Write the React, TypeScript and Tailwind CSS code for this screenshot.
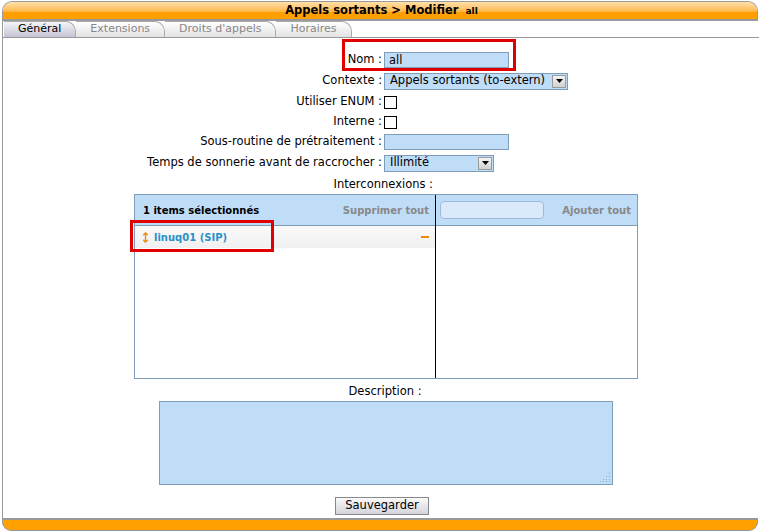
import { MoveVertical } from "lucide-react";

const font = { fontFamily: '"DejaVu Sans", Verdana, sans-serif' };

function Tab(props: { label: string; active?: boolean }) {
  return (
    <div
      className={
        "h-[16px] px-[14px] flex items-center text-[11px] border border-l-0 border-b-0 border-[#aaa] rounded-tr-[10px] " +
        (props.active
          ? "bg-gradient-to-b from-[#f4f4f8] to-[#c4c4d4] text-black"
          : "bg-gradient-to-b from-white to-[#e2e2e2] text-[#888]")
      }
    >
      {props.label}
    </div>
  );
}

function Select(props: { value: string; width: string }) {
  return (
    <div
      className={
        "h-[17px] flex items-center justify-between bg-[#c0ddf8] border border-[#7f9db9] text-[11.5px] pl-[5px] pr-[1px] " +
        props.width
      }
    >
      <span>{props.value}</span>
      <span className="w-[14px] h-[13px] bg-gradient-to-b from-[#f4f4f4] to-[#d0d0d0] border border-[#9a9a9a] flex items-center justify-center">
        <svg width="7" height="4" viewBox="0 0 7 4">
          <path d="M0 0h7L3.5 4z" fill="#000" />
        </svg>
      </span>
    </div>
  );
}

function Row(props: { label: string; children: React.ReactNode; h?: string }) {
  return (
    <div className={"flex items-center " + (props.h ?? "h-[20px]")}>
      <div className="w-[381px] text-right pr-[2px] text-[11.5px]">{props.label}</div>
      {props.children}
    </div>
  );
}

export default function App() {
  return (
    <div className="w-[759px] h-[532px] bg-white relative overflow-hidden text-black" style={font}>
      {/* header */}
      <div className="ml-[2px] mt-[1px] w-[756px] h-[20px] rounded-t-[10px] border border-[#999] border-b-[2px] overflow-hidden flex flex-col">
        <div className="h-[10px] bg-gradient-to-b from-[#ffe0a8] to-[#ffb640]" />
        <div className="flex-1 bg-[#ff9f00]" />
        <div className="absolute top-[2px] left-0 w-[759px] flex justify-center items-baseline gap-[7px] pl-[4px]">
          <span className="text-[11.5px] font-bold">Appels sortants &gt; Modifier</span>
          <span className="text-[9px] font-bold">all</span>
        </div>
      </div>

      {/* body */}
      <div className="ml-[2px] border-l border-[#999] h-[497px] flex flex-col">
        <div className="flex pl-[1px] border-b border-[#999]">
          <Tab label="Général" active />
          <Tab label="Extensions" />
          <Tab label="Droits d'appels" />
          <Tab label="Horaires" />
        </div>

        <div className="pt-[12px] flex flex-col">
          <Row label="Nom :">
            <div className="w-[125px] h-[16px] bg-[#c0ddf8] border border-[#7f9db9] text-[11.5px] leading-[14px] pl-[4px]">all</div>
          </Row>
          <Row label="Contexte :" h="h-[22px]">
            <Select value="Appels sortants (to-extern)" width="w-[184px]" />
          </Row>
          <Row label="Utiliser ENUM :">
            <div className="w-[13px] h-[13px] border border-black bg-white" />
          </Row>
          <Row label="Interne :">
            <div className="w-[13px] h-[13px] border border-black bg-white" />
          </Row>
          <Row label="Sous-routine de prétraitement :">
            <div className="w-[125px] h-[16px] bg-[#c0ddf8] border border-[#7f9db9]" />
          </Row>
          <Row label="Temps de sonnerie avant de raccrocher :" h="h-[22px]">
            <Select value="Illimité" width="w-[110px]" />
          </Row>
          <div className="h-[20px] flex items-center pt-[1px]">
            <div className="w-[430px] text-right text-[11.5px]">Interconnexions :</div>
          </div>

          {/* multiselect */}
          <div className="ml-[131px] w-[504px] h-[185px] border border-[#7f9db9] flex">
            <div className="w-[301px] flex flex-col border-r border-black">
              <div className="h-[31px] bg-[#c0ddf8] border-b border-[#7f9db9] flex items-center justify-between pl-[8px] pr-[6px] text-[10px] font-bold">
                <span>1 items sélectionnés</span>
                <span className="text-[#888]">Supprimer tout</span>
              </div>
              <div className="h-[22px] bg-gradient-to-b from-[#fafafa] to-[#f0f0f0] flex items-center justify-between pl-[5px] pr-[6px] text-[10px] font-bold">
                <span className="flex items-center gap-[3px] text-[#2a8fc8]">
                  <MoveVertical size={11} color="#f08c00" strokeWidth={3} />
                  linuq01 (SIP)
                </span>
                <span className="w-[8px] h-[2px] bg-[#f08c00]" />
              </div>
            </div>
            <div className="flex-1 flex flex-col">
              <div className="h-[31px] bg-[#c0ddf8] border-b border-[#7f9db9] flex items-center justify-between pl-[4px] pr-[6px] text-[10px] font-bold">
                <div className="w-[104px] h-[18px] rounded-[4px] bg-[#dbeafa] border border-[#9bb9d8]" />
                <span className="text-[#888]">Ajouter tout</span>
              </div>
            </div>
          </div>

          <div className="h-[22px] flex items-center justify-center text-[11.5px] pl-[8px] pt-[4px]">Description :</div>
          <div className="ml-[156px] w-[454px] h-[84px] bg-[#c0ddf8] border border-[#7f9db9] relative">
            <svg className="absolute right-[1px] bottom-[1px]" width="11" height="11" viewBox="0 0 11 11">
              <g fill="#8fa9c4">
                <rect x="9" y="1" width="1" height="1" />
                <rect x="6" y="4" width="1" height="1" />
                <rect x="9" y="4" width="1" height="1" />
                <rect x="3" y="7" width="1" height="1" />
                <rect x="6" y="7" width="1" height="1" />
                <rect x="9" y="7" width="1" height="1" />
                <rect x="0" y="9" width="1" height="1" />
                <rect x="3" y="9" width="1" height="1" />
                <rect x="6" y="9" width="1" height="1" />
                <rect x="9" y="9" width="1" height="1" />
              </g>
            </svg>
          </div>

          <div className="flex justify-center pt-[12px] pl-[2px]">
            <button className="h-[18px] px-[9px] text-[11.5px] bg-gradient-to-b from-[#fafafa] to-[#d4d4dc] border border-[#888] leading-none">
              Sauvegarder
            </button>
          </div>
        </div>
      </div>

      {/* footer */}
      <div className="absolute left-[2px] top-[518px] w-[756px] h-[13px] bg-[#ff9f00] border border-[#999] border-t-[2px] rounded-b-[9px]" />

      {/* annotation boxes */}
      <div className="absolute left-[342px] top-[39px] w-[174px] h-[32px] border-[3px] border-[#e00000]" />
      <div className="absolute left-[130px] top-[220px] w-[144px] h-[32px] border-[3px] border-[#e00000]" />
    </div>
  );
}
